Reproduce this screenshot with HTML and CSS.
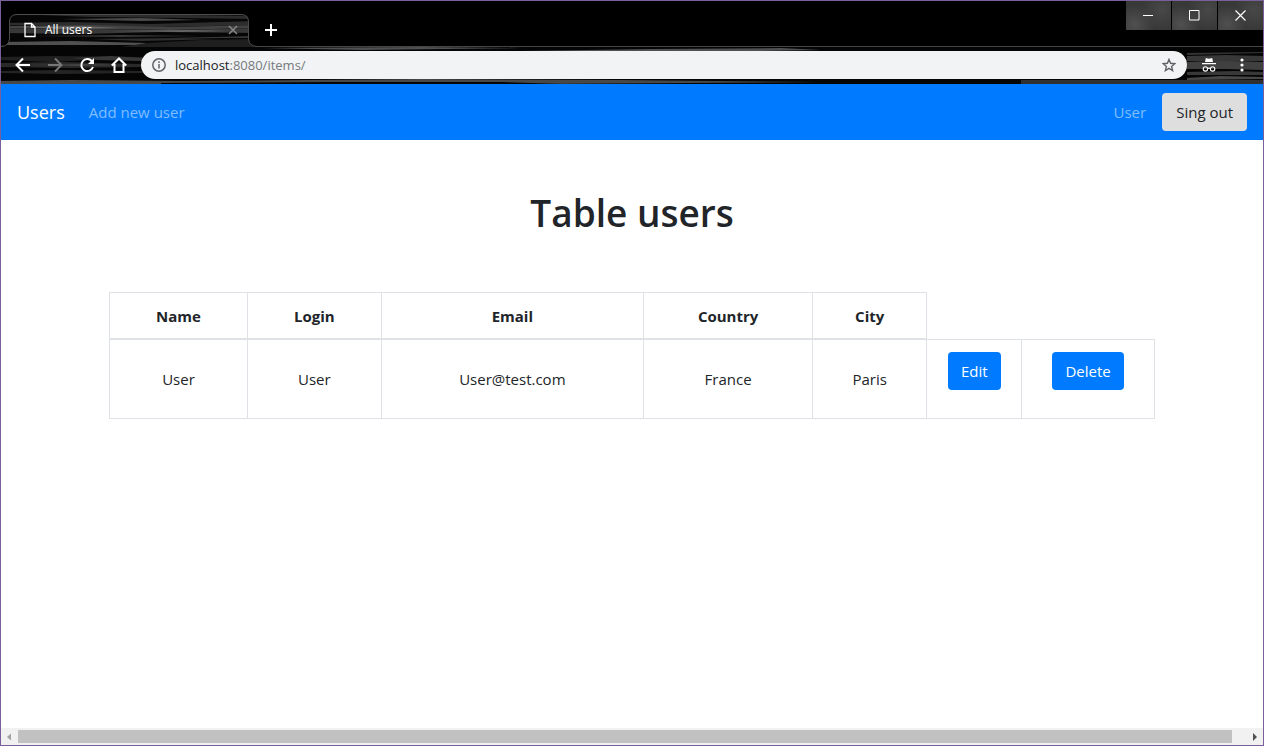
FILE: index.html
```html
<!DOCTYPE html>
<html lang="en">
<head>
<meta charset="utf-8">
<title>All users</title>
<link rel="stylesheet" href="styles.css">
</head>
<body>
<div class="window">
  <header class="titlebar">
    <div class="tab">
      <svg class="tab-shape" viewBox="0 0 256 34" aria-hidden="true">
        <defs><clipPath id="tab-clip"><path d="M0 34Q8 33 8 26V9Q8 1 16 1H240Q248 1 248 9V26Q248 33 256 34Z"/></clipPath></defs>
        <g clip-path="url(#tab-clip)">
          <rect width="256" height="34" fill="#060606"/>
          <path d="M40 2 120 1 256 3V6L180 5 90 4Z" fill="#2c2c2c"/>
          <path d="M60 6 140 5 200 7 140 8Z" fill="#4a4a4a"/>
          <path d="M0 10 70 9 150 11 256 8V12L160 14 0 12Z" fill="#2d2d2d"/>
          <path d="M0 13 90 12 170 14 256 12V15L170 17 90 16 0 15Z" fill="#424242"/>
          <path d="M0 15 90 16 170 17 256 15V20L160 19 80 21 0 20Z" fill="#383838"/>
          <path d="M20 14 80 13 120 15 60 16ZM110 18 190 17 230 18 180 19Z" fill="#666"/>
          <path d="M30 23 120 22 200 23 120 24ZM170 25 256 23V25Z" fill="#383838"/>
          <path d="M0 29 70 28 146 30 140 32 0 32Z" fill="#505050"/>
          <path d="M146 30 200 27 256 26V34H120Z" fill="#1f1f1f"/>
          <path d="M90 26 180 25 220 26 140 28Z" fill="#2f2f2f"/>
        </g>
        <path d="M0 33.500Q8 33 8.500 26V9Q8.500 1.500 16 1.500H240Q247.500 1.500 247.500 9V26Q248 33 256 33.500" fill="none" stroke="#4c4c4c"/>
      </svg>
      <svg class="file-icon" viewBox="0 0 12 16" fill="none" stroke="#fff" stroke-width="1.300" aria-hidden="true"><path d="M1 1.500h6.500L11 5v9.500H1ZM7.500 1.500V5H11"/></svg>
      <span class="tab-title">All users</span>
      <button class="bare" aria-label="Close tab"><svg width="10" height="10" viewBox="0 0 10 10" stroke="#888" stroke-width="1.500"><path d="m1 1 8 8M9 1 1 9"/></svg></button>
    </div>
    <button class="bare new-tab" aria-label="New tab"><svg width="12" height="12" viewBox="0 0 12 12" stroke="#fff" stroke-width="2"><path d="M6 0v12M0 6h12"/></svg></button>
    <div class="window-controls">
      <button aria-label="Minimize"><svg width="11" height="11" viewBox="0 0 11 11" fill="none" stroke="#fff"><path d="M0 5.500h10"/></svg></button>
      <button aria-label="Maximize"><svg width="11" height="11" viewBox="0 0 11 11" fill="none" stroke="#fff"><path d="M.5.5h9.500v9.500H.5Z"/></svg></button>
      <button aria-label="Close"><svg width="11" height="11" viewBox="0 0 11 11" fill="none" stroke="#fff" stroke-width="1.200"><path d="m.5.5 10 10m0-10-10 10"/></svg></button>
    </div>
  </header>

  <div class="toolbar">
    <svg class="texture" viewBox="0 0 1262 37" preserveAspectRatio="none" aria-hidden="true">
      <rect width="1262" height="37" fill="#050505"/>
      <path d="M0 10 50 9 142 10V14L90 13 50 15 0 13Z" fill="#202020"/>
      <path d="M70 11 110 9 142 11V14L100 13Z" fill="#383838"/>
      <path d="M0 16 60 15 142 17V20L70 21 0 20Z" fill="#292929"/>
      <path d="M30 18 80 17 130 18 80 19Z" fill="#444"/>
      <path d="M0 24 60 23 142 24V26L60 27 0 26Z" fill="#242424"/>
      <path d="M0 34 70 33 180 34 420 32 620 33 820 35 540 37H0Z" fill="#484848"/>
      <path d="M160 36 330 35 500 35 560 37 160 37Z" fill="#060606"/>
      <path d="M260 1 420 0 520 1 360 3ZM520 4 650 2 780 1 820 3 700 5Z" fill="#505050"/>
      <path d="M1020 33H1262V37H1020Z" fill="#303030"/>
      <path d="M1186 6 1262 5V6L1186 8Z" fill="#333"/>
      <path d="M1186 9 1225 8 1262 9V14L1220 15 1186 14Z" fill="#383838"/>
      <path d="M1186 15 1220 14 1262 15V23L1225 22 1186 22Z" fill="#404040"/>
      <path d="M1186 25 1235 24 1262 25V28L1186 28Z" fill="#383838"/>
      <path d="M1186 31 1220 29 1262 30V32L1186 33Z" fill="#484848"/>
    </svg>
    <nav class="browser-nav" aria-label="Browser">
      <button class="bare" aria-label="Back"><svg width="16" height="16" viewBox="0 0 16 16" fill="none" stroke="#fff" stroke-width="2"><path d="M15 8H2M8 1.500 1.500 8 8 14.500"/></svg></button>
      <button class="bare" aria-label="Forward"><svg width="16" height="16" viewBox="0 0 16 16" fill="none" stroke="#777" stroke-width="2"><path d="M1 8h13M8 1.500 14.500 8 8 14.500"/></svg></button>
      <button class="bare" aria-label="Reload"><svg width="16" height="16" viewBox="0 0 16 16"><path d="M12.800 4A6 6 0 1 0 14 10" fill="none" stroke="#fff" stroke-width="2"/><path d="M15 1v6H9Z" fill="#fff"/></svg></button>
      <button class="bare" aria-label="Home"><svg width="16" height="16" viewBox="0 0 16 16" fill="none" stroke="#fff" stroke-width="2"><path d="M.8 8.500 8 1.500l7.200 7M3.500 7v8h9V7"/></svg></button>
    </nav>
    <div class="address">
      <svg width="14" height="14" viewBox="0 0 14 14" aria-hidden="true"><circle cx="7" cy="7" r="6.200" fill="none" stroke="#5f6368" stroke-width="1.500"/><path d="M7 6v4.500M7 3.300v1.600" stroke="#5f6368" stroke-width="1.500"/></svg>
      <div class="url" role="textbox" aria-label="Address" tabindex="0"><span class="host">localhost</span>:8080/items/</div>
      <button class="bare" aria-label="Bookmark"><svg width="14" height="14" viewBox="0 0 14 14" fill="none" stroke="#5f6368" stroke-width="1.400"><path d="m7 1.400 1.600 3.900 4.200.4-3.200 2.800 1 4.100L7 10.400l-3.600 2.200 1-4.100L1.200 5.700l4.200-.4Z"/></svg></button>
    </div>
    <svg class="incognito" width="14" height="14" viewBox="0 0 14 14" aria-label="Incognito" role="img"><path d="M3.800 0 7 .7 10.200 0 11 4H3ZM0 5h14v1.300H0Z" fill="#fff"/><g fill="none" stroke="#fff" stroke-width="1.100"><circle cx="3.400" cy="10.900" r="2.200"/><circle cx="10.600" cy="10.900" r="2.200"/><path d="M5.600 10.500q1.400-.8 2.800 0"/></g></svg>
    <button class="bare menu" aria-label="Menu"><svg width="4" height="14" viewBox="0 0 4 14" fill="#fff"><circle cx="2" cy="2" r="1.600"/><circle cx="2" cy="7" r="1.600"/><circle cx="2" cy="12" r="1.600"/></svg></button>
  </div>

  <nav class="navbar" aria-label="Main">
    <a class="brand" href="#">Users</a>
    <a class="nav-link" href="#">Add new user</a>
    <a class="nav-link account" href="#">User</a>
    <button class="btn btn-light">Sing out</button>
  </nav>

  <main class="content">
    <h1>Table users</h1>
    <table class="users">
      <colgroup><col class="c-name"><col class="c-login"><col class="c-email"><col class="c-country"><col class="c-city"><col class="c-edit"><col class="c-delete"></colgroup>
      <thead>
        <tr><th scope="col">Name</th><th scope="col">Login</th><th scope="col">Email</th><th scope="col">Country</th><th scope="col">City</th></tr>
      </thead>
      <tbody>
        <tr><td>User</td><td>User</td><td>User@test.com</td><td>France</td><td>Paris</td><td class="action"><button class="btn">Edit</button></td><td class="action"><button class="btn">Delete</button></td></tr>
      </tbody>
    </table>
  </main>

  <div class="scrollbar" aria-hidden="true">
    <svg width="17" height="16" viewBox="0 0 17 16"><path d="M10 4.500v7L6 8Z" fill="#a3a3a3"/></svg>
    <div class="thumb"></div>
    <svg class="scroll-right" width="17" height="16" viewBox="0 0 17 16"><path d="M7 4v8L11 8Z" fill="#505050"/></svg>
  </div>
</div>
</body>
</html>
```
FILE: styles.css
```css
* { box-sizing: border-box; }

body {
  margin: 0;
  font: 15px/24px "Open Sans", "Noto Sans", sans-serif;
  color: #212529;
}

svg { display: block; }
button { font: inherit; cursor: pointer; }

.window {
  display: flex;
  flex-direction: column;
  min-height: 100vh;
  border: 1px solid #79609b;
  background: #fff;
}

.bare {
  display: flex;
  padding: 0;
  border: 0;
  background: none;
}

.titlebar {
  display: flex;
  height: 46px;
  background: #000;
  border-bottom: 1px solid #444;
}

.tab {
  position: relative;
  display: flex;
  align-items: center;
  gap: 9px;
  width: 256px;
  height: 34px;
  margin-top: 12px;
  padding: 0 19px 0 23px;
}

.tab-shape, .texture {
  position: absolute;
  inset: 0;
  width: 100%;
  height: 100%;
}

.tab > :not(.tab-shape), .toolbar > :not(.texture) { position: relative; }
.file-icon { width: 12px; height: 16px; }

.tab-title {
  flex: 1;
  color: #fff;
  font-size: 12px;
}

.new-tab { align-items: center; margin: 12px 0 0 8px; }

.window-controls {
  display: flex;
  gap: 1px;
  height: 29px;
  margin-left: auto;
}

.window-controls button {
  display: grid;
  place-items: center;
  width: 45px;
  padding: 0;
  border: 0;
  background:
    radial-gradient(circle at 20% 80%, #505050, transparent 45%),
    radial-gradient(circle at 80% 30%, #484848, transparent 50%),
    #383838;
}

.toolbar {
  position: relative;
  display: flex;
  align-items: center;
  height: 37px;
  padding: 0 19px 2px 14px;
}

.browser-nav { display: flex; gap: 16px; }

.address {
  display: flex;
  flex: 1;
  align-items: center;
  gap: 9px;
  height: 28px;
  margin: 0 15px 0 14px;
  padding: 0 11px;
  border-radius: 14px;
  background: #f1f3f4;
}

.url { flex: 1; color: #757a7f; font-size: 13px; }
.host { color: #202124; }
.menu { margin-left: 24px; }

.navbar {
  display: flex;
  align-items: center;
  min-height: 56px;
  padding: 8px 16px;
  background: #007bff;
}

.navbar a { text-decoration: none; }
.navbar .brand { margin-right: 24px; color: #fff; font-size: 18px; }
.nav-link { color: #80bdff; }
.account { margin: 0 16px 0 auto; }

.btn {
  height: 38px;
  padding: 0 13px;
  border: 0;
  border-radius: 4px;
  background: #007bff;
  color: #fff;
}

.navbar .btn-light { padding: 0 14px; background: #dedede; color: #212529; }

.content {
  flex: 1;
  padding: 48px 108px;
}

h1 {
  margin: 0 0 54px;
  font-size: 37px;
  line-height: 50px;
  font-weight: 600;
  text-align: center;
}

.users {
  width: 100%;
  table-layout: fixed;
  border-collapse: collapse;
  text-align: center;
}

.users th, .users td {
  padding: 11px 8px;
  border: 1px solid #dee2e6;
}

.users th { padding-bottom: 10px; border-bottom-width: 2px; font-weight: 700; }
.users td { height: 79px; }
.users .action { padding-top: 12px; vertical-align: top; }

.c-name { width: 13.2%; }
.c-login { width: 12.8%; }
.c-email { width: 25.1%; }
.c-country { width: 16.2%; }
.c-city { width: 10.9%; }
.c-edit { width: 9.1%; }
.c-delete { width: 12.7%; }

.scrollbar {
  display: flex;
  align-items: center;
  height: 17px;
  background: #f1f1f1;
}

.thumb { flex: 1; height: 13px; margin-right: 14px; background: #c1c1c1; }
```
